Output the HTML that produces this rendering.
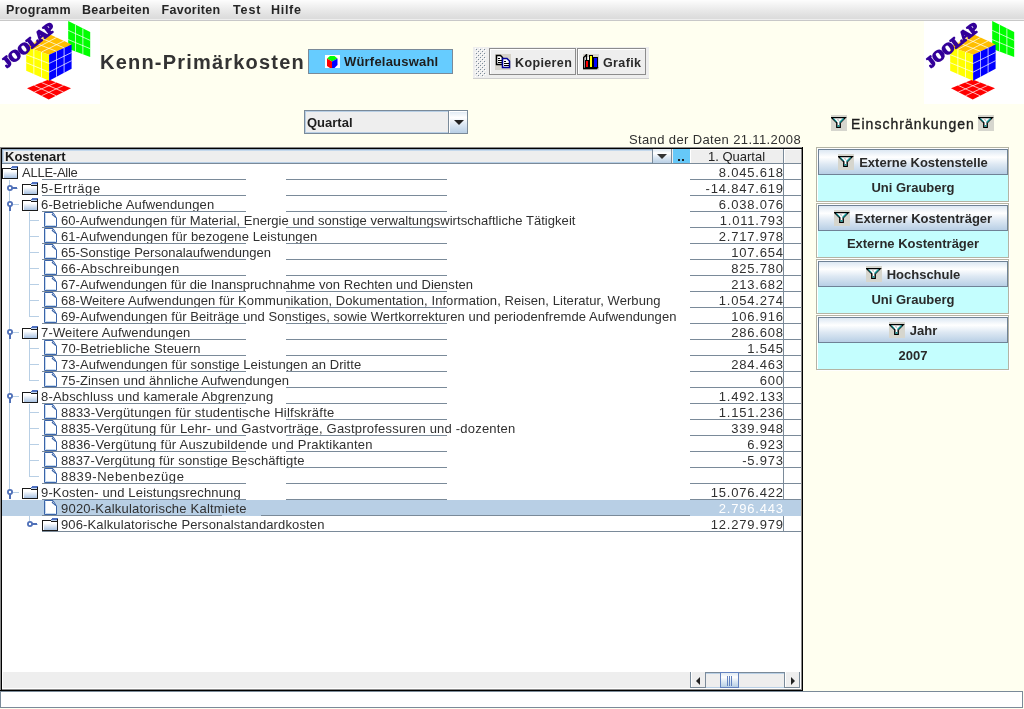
<!DOCTYPE html>
<html><head><meta charset="utf-8">
<style>
*{margin:0;padding:0;box-sizing:border-box}
html,body{width:1024px;height:709px;overflow:hidden;background:#fffff0;font-family:"Liberation Sans",sans-serif;color:#222}
.a{position:absolute}
#menu{left:0;top:0;width:1024px;height:21px;background:linear-gradient(#fdfdfd,#f5f5f5 20%,#e6e6e6 60%,#dcdcdc 90%);border-bottom:1px solid #c8c8c8;box-shadow:inset 0 -1px 0 #eeeeee}
#menu span{position:absolute;top:2px;margin-left:-1px;font-weight:bold;font-size:12.5px;color:#262626;line-height:16px}
.logo{top:21px;width:100px;height:83px;background:#fff}
.logo svg{position:absolute;left:0;top:-1px}
#title{left:100px;top:50px;font-size:20px;font-weight:bold;line-height:24px;color:#333;letter-spacing:1.2px;white-space:nowrap}
#wb{left:308px;top:49px;width:145px;height:25px;background:#66ccff;border:1px solid #7a8a99}
#wb span{position:absolute;left:35px;top:4px;font-weight:bold;font-size:13px;line-height:16px;color:#1e1e1e;letter-spacing:0.2px}
#tb{left:473px;top:47px;width:176px;height:32px;background:#eeeeee;border-bottom:1px solid #cfcfcf}
.btn{position:absolute;top:1px;height:27px;border:1px solid #8c8c8c;background:#eeeeee;box-shadow:inset 1px 1px 0 #fff}
.btn span{position:absolute;top:6px;font-weight:bold;font-size:12.5px;line-height:16px;color:#2a2a2a;letter-spacing:0.37px}
#combo{left:304px;top:110px;width:164px;height:24px;border:1px solid #7a8a99;background:#eeeeee}
#combo span{position:absolute;left:2px;top:4px;font-weight:bold;font-size:13px;line-height:16px;color:#1e1e1e}
#combo:before{content:"";position:absolute;left:0;top:0;width:142px;height:20px;border:1px solid #b8cfe5}
#combo i{position:absolute;left:143px;top:0;width:19px;height:22px;border-left:1px solid #7a8a99;background:linear-gradient(#dde8f3,#fff 30%,#dde8f3 60%,#b8cfe5);box-shadow:inset 1px 1px 0 #fff}
#combo i:after{content:"";position:absolute;left:5px;top:9px;border-left:5px solid transparent;border-right:5px solid transparent;border-top:5px solid #222}
#stand{left:600px;top:132px;width:201px;text-align:right;font-size:13px;line-height:16px;color:#303030;letter-spacing:0.37px;white-space:nowrap}
#table{left:0;top:147px;width:803px;height:544px;border:2px solid #000;background:#fff}
#hdr{position:absolute;left:0;top:0;width:799px;height:15px;background:#eeeeee;border-bottom:1px solid #7a8a99}
.row{position:absolute;left:0;width:799px;height:16px;font-size:13px;line-height:16px;white-space:nowrap;color:#303030}
.row .t{position:absolute;top:1px}
.row .n{position:absolute;right:18px;top:1px;text-align:right;letter-spacing:0.8px;margin-right:-0.8px}
.ln{position:absolute;height:1px;background:#7a8a99}
#filt{left:831px;top:115px}
.box{position:absolute;left:816px;width:193px;height:55px;border:1px solid #b4b4a4;background:#fff;box-shadow:1px 1px 0 #fff}
.box .bh{position:absolute;left:1px;top:1px;width:190px;height:26px;border:1px solid #6f8296;background:linear-gradient(#dde8f3,#fff 30%,#dde8f3 60%,#b8cfe5)}
.box .bv{position:absolute;left:1px;top:27px;width:190px;height:26px;background:#c4fefe}
.box .hc{position:absolute;left:0;top:4px;width:100%;height:16px;display:flex;justify-content:center;align-items:center;gap:5px}
.box .hc b{font-weight:bold;font-size:13px;line-height:16px;color:#2a2a2a;letter-spacing:0px;position:relative;top:1px}
.box .bv span{position:absolute;left:0;width:100%;text-align:center;font-weight:bold;font-size:13px;line-height:16px;color:#2a2a2a;letter-spacing:0px}
#status{left:0;top:691px;width:1023px;height:17px;border:1px solid #7a8a99;background:#fff}
</style></head><body style="will-change:transform">
<svg width="0" height="0" style="position:absolute"><defs>
<g id="funnel"><rect width="16" height="16" fill="#d6d6ce"/><path d="M0.7 2.6H14.2L9.2 7.8V12.4H5.8V7.8Z" fill="#fff" stroke="#000" stroke-width="1.4"/><path d="M2.3 3.4L5.6 6.8" stroke="#1a9a9a" stroke-width="1.1"/><path d="M12.6 3.4L8.6 7.6" stroke="#1a9a9a" stroke-width="1.5"/><rect x="6.5" y="10" width="2" height="1.8" fill="#1a9a9a"/><path d="M6.2 3.6L7.8 5.8" stroke="#c8c8c8" stroke-width="1.4"/></g>
</defs></svg>
<svg class="a" style="left:831px;top:115px" width="16" height="16"><use href="#funnel"/></svg><svg class="a" style="left:978px;top:115px" width="16" height="16"><use href="#funnel"/></svg>
<div id="menu" class="a">
<span style="left:7px;letter-spacing:0.3px">Programm</span><span style="left:83px;letter-spacing:0.33px">Bearbeiten</span><span style="left:162.5px;letter-spacing:0.3px">Favoriten</span><span style="left:234px;letter-spacing:0.9px">Test</span><span style="left:272px;letter-spacing:0.7px">Hilfe</span>
</div>
<div class="a logo" style="left:0"><!--LOGO--><svg width="100" height="83" viewBox="0 0 100 83"><path d="M68.2 1.1L90.2 12.1L90.2 37L68.2 28.8Z" fill="#00ff00"/><path d="M75.53 4.77L75.53 31.53" stroke="#fff" stroke-width="0.8" opacity="0.9"/><path d="M68.20 10.33L90.20 20.40" stroke="#fff" stroke-width="0.8" opacity="0.9"/><path d="M82.87 8.43L82.87 34.27" stroke="#fff" stroke-width="0.8" opacity="0.9"/><path d="M68.20 19.57L90.20 28.70" stroke="#fff" stroke-width="0.8" opacity="0.9"/><path d="M27 68.35L48.7 59.6L71 68.35L48.7 79.5Z" fill="#ff0000"/><path d="M34.23 65.43L56.13 75.78" stroke="#fff" stroke-width="0.8" opacity="0.9"/><path d="M34.23 72.07L56.13 62.52" stroke="#fff" stroke-width="0.8" opacity="0.9"/><path d="M41.47 62.52L63.57 72.07" stroke="#fff" stroke-width="0.8" opacity="0.9"/><path d="M41.47 75.78L63.57 65.43" stroke="#fff" stroke-width="0.8" opacity="0.9"/><path d="M26.2 26.7L49 14L71.6 24.4L49.1 34.8Z" fill="#ffbf00"/><path d="M33.80 22.47L56.60 31.33" stroke="#fff" stroke-width="0.8" opacity="0.9"/><path d="M33.83 29.40L56.53 17.47" stroke="#fff" stroke-width="0.8" opacity="0.9"/><path d="M41.40 18.23L64.10 27.87" stroke="#fff" stroke-width="0.8" opacity="0.9"/><path d="M41.47 32.10L64.07 20.93" stroke="#fff" stroke-width="0.8" opacity="0.9"/><path d="M26.2 26.7L49.1 34.8L49.1 60.8L26.2 50.7Z" fill="#ffff00"/><path d="M33.83 29.40L33.83 54.07" stroke="#fff" stroke-width="0.8" opacity="0.9"/><path d="M26.20 34.70L49.10 43.47" stroke="#fff" stroke-width="0.8" opacity="0.9"/><path d="M41.47 32.10L41.47 57.43" stroke="#fff" stroke-width="0.8" opacity="0.9"/><path d="M26.20 42.70L49.10 52.13" stroke="#fff" stroke-width="0.8" opacity="0.9"/><path d="M49.1 34.8L71.6 24.4L71.6 48.8L49.1 60.8Z" fill="#0000ff"/><path d="M56.60 31.33L56.60 56.80" stroke="#fff" stroke-width="0.8" opacity="0.9"/><path d="M49.10 43.47L71.60 32.53" stroke="#fff" stroke-width="0.8" opacity="0.9"/><path d="M64.10 27.87L64.10 52.80" stroke="#fff" stroke-width="0.8" opacity="0.9"/><path d="M49.10 52.13L71.60 40.67" stroke="#fff" stroke-width="0.8" opacity="0.9"/><text x="0" y="0" transform="translate(28.3 25) rotate(-38) scale(1.1 1.05)" text-anchor="middle" dominant-baseline="central" font-family="Liberation Serif" font-weight="bold" font-size="14" letter-spacing="0" fill="#330099" stroke="#330099" stroke-width="1.7" stroke-linejoin="round">JOOLAP</text></svg><!--/LOGO--></div>
<div class="a logo" style="left:924px"><!--LOGO--><svg width="100" height="83" viewBox="0 0 100 83"><path d="M68.2 1.1L90.2 12.1L90.2 37L68.2 28.8Z" fill="#00ff00"/><path d="M75.53 4.77L75.53 31.53" stroke="#fff" stroke-width="0.8" opacity="0.9"/><path d="M68.20 10.33L90.20 20.40" stroke="#fff" stroke-width="0.8" opacity="0.9"/><path d="M82.87 8.43L82.87 34.27" stroke="#fff" stroke-width="0.8" opacity="0.9"/><path d="M68.20 19.57L90.20 28.70" stroke="#fff" stroke-width="0.8" opacity="0.9"/><path d="M27 68.35L48.7 59.6L71 68.35L48.7 79.5Z" fill="#ff0000"/><path d="M34.23 65.43L56.13 75.78" stroke="#fff" stroke-width="0.8" opacity="0.9"/><path d="M34.23 72.07L56.13 62.52" stroke="#fff" stroke-width="0.8" opacity="0.9"/><path d="M41.47 62.52L63.57 72.07" stroke="#fff" stroke-width="0.8" opacity="0.9"/><path d="M41.47 75.78L63.57 65.43" stroke="#fff" stroke-width="0.8" opacity="0.9"/><path d="M26.2 26.7L49 14L71.6 24.4L49.1 34.8Z" fill="#ffbf00"/><path d="M33.80 22.47L56.60 31.33" stroke="#fff" stroke-width="0.8" opacity="0.9"/><path d="M33.83 29.40L56.53 17.47" stroke="#fff" stroke-width="0.8" opacity="0.9"/><path d="M41.40 18.23L64.10 27.87" stroke="#fff" stroke-width="0.8" opacity="0.9"/><path d="M41.47 32.10L64.07 20.93" stroke="#fff" stroke-width="0.8" opacity="0.9"/><path d="M26.2 26.7L49.1 34.8L49.1 60.8L26.2 50.7Z" fill="#ffff00"/><path d="M33.83 29.40L33.83 54.07" stroke="#fff" stroke-width="0.8" opacity="0.9"/><path d="M26.20 34.70L49.10 43.47" stroke="#fff" stroke-width="0.8" opacity="0.9"/><path d="M41.47 32.10L41.47 57.43" stroke="#fff" stroke-width="0.8" opacity="0.9"/><path d="M26.20 42.70L49.10 52.13" stroke="#fff" stroke-width="0.8" opacity="0.9"/><path d="M49.1 34.8L71.6 24.4L71.6 48.8L49.1 60.8Z" fill="#0000ff"/><path d="M56.60 31.33L56.60 56.80" stroke="#fff" stroke-width="0.8" opacity="0.9"/><path d="M49.10 43.47L71.60 32.53" stroke="#fff" stroke-width="0.8" opacity="0.9"/><path d="M64.10 27.87L64.10 52.80" stroke="#fff" stroke-width="0.8" opacity="0.9"/><path d="M49.10 52.13L71.60 40.67" stroke="#fff" stroke-width="0.8" opacity="0.9"/><text x="0" y="0" transform="translate(28.3 25) rotate(-38) scale(1.1 1.05)" text-anchor="middle" dominant-baseline="central" font-family="Liberation Serif" font-weight="bold" font-size="14" letter-spacing="0" fill="#330099" stroke="#330099" stroke-width="1.7" stroke-linejoin="round">JOOLAP</text></svg><!--/LOGO--></div>
<div id="title" class="a">Kenn-Primärkosten</div>
<div id="wb" class="a"><svg class="a" style="left:16px;top:5px" width="15" height="13"><rect width="15" height="13" fill="#fff"/><path d="M2 3.5L5 1H9.5L12.5 3.5L7 6.5Z" fill="#00ff00"/><path d="M2 3.5L7 6.5V13H5L2 11Z" fill="#ff0000"/><path d="M7 6.5L12.5 3.5V10L9.5 13H7Z" fill="#0000ff"/></svg><span>Würfelauswahl</span></div>
<div id="tb" class="a"><svg class="a" style="left:2px;top:1px" width="11" height="29"><defs><pattern id="gp" width="4" height="4" patternUnits="userSpaceOnUse"><rect x="1" y="1" width="1" height="1" fill="#7a8a99"/><rect x="3" y="3" width="1" height="1" fill="#7a8a99"/><rect x="2" y="2" width="1" height="1" fill="#fff"/><rect x="0" y="0" width="1" height="1" fill="#fff"/></pattern></defs><rect width="11" height="29" fill="url(#gp)"/></svg>
 <div class="btn" style="left:16px;width:87px"><svg class="a" style="left:5px;top:5px" width="16" height="16"><rect width="16" height="16" fill="#d6d3cb"/><path d="M1.5 1.5H5.5L7.5 3.5V10.5H1.5Z" fill="#fff" stroke="#000" stroke-width="1.5"/><rect x="3" y="4" width="2" height="1" fill="#000"/><rect x="3" y="6" width="4" height="1" fill="#000"/><rect x="3" y="8" width="4" height="1" fill="#000"/><path d="M7.5 4.5H12L14.5 7V13.5H7.5Z" fill="#fff" stroke="#000099" stroke-width="1.5"/><rect x="9" y="7" width="2" height="1" fill="#000"/><rect x="9" y="9" width="5" height="1" fill="#000"/><rect x="9" y="11" width="5" height="1" fill="#000"/></svg><span style="left:25px">Kopieren</span></div>
 <div class="btn" style="left:104px;width:69px"><svg class="a" style="left:5px;top:5px" width="16" height="16"><rect width="16" height="16" fill="#d6d3cb"/><path d="M1 3.5L3.5 1V14H14.5" fill="#fff" stroke="none"/><rect x="1" y="3" width="13" height="11" fill="#fff"/><path d="M0.7 15V3.5L3.5 0.7V6" fill="none" stroke="#000" stroke-width="1.4"/><path d="M0 14.5H13.5L15 13" fill="none" stroke="#000" stroke-width="1.4"/><rect x="2.5" y="6.5" width="3" height="7" fill="#ff0000" stroke="#000"/><rect x="6.5" y="1.5" width="3" height="12" fill="#ffff00" stroke="#000"/><rect x="10.5" y="3.5" width="4" height="10" fill="#0000ff" stroke="#000"/></svg><span style="left:25px">Grafik</span></div>
</div>
<div id="combo" class="a"><span>Quartal</span><i></i></div>
<div id="stand" class="a">Stand der Daten 21.11.2008</div>
<div id="table" class="a">
 <div id="hdr">
 <div class="a" style="left:0;top:0;width:650px;height:14px;border:1px solid #98aec6;border-bottom-color:#b8cfe5;border-right:none;background:#eeeeee;box-shadow:inset 1px 1px 0 #c4d8ec"></div>
 <div class="a" style="left:3px;top:0;font-weight:bold;font-size:13px;line-height:15px;color:#1a1a1a">Kostenart</div>
 <div class="a" style="left:650px;top:0;width:20px;height:14px;border-left:1px solid #7a8a99;border-right:1px solid #7a8a99;background:linear-gradient(#dde8f3,#fff 30%,#dde8f3 60%,#b8cfe5)"></div>
 <svg class="a" style="left:655px;top:5px" width="10" height="5"><path d="M0 0H10L5 5Z" fill="#333"/></svg>
 <div class="a" style="left:671px;top:0;width:17px;height:14px;background:#66c8f8"></div>
 <div class="a" style="left:676px;top:10px;width:2px;height:2px;background:#222"></div>
 <div class="a" style="left:680px;top:10px;width:2px;height:2px;background:#222"></div>
 <div class="a" style="left:688px;top:0;width:93px;height:14px;border-top:1px solid #fff;border-left:1px solid #fff;background:#eeeeee"></div>
 <div class="a" style="left:688px;top:0;width:93px;text-align:center;font-size:13px;line-height:15px;color:#222">1. Quartal</div>
 <div class="a" style="left:782px;top:0;width:17px;height:14px;border-top:1px solid #fff;border-left:1px solid #fff;background:#eeeeee"></div>
</div>
<!--ROWS--><div class="a" style="left:0;top:351px;width:799px;height:16px;background:#b8cfe5"></div><svg class="a" style="left:-2px;top:-149px" width="810" height="560"><defs><linearGradient id="fg" x1="0" y1="0" x2="0" y2="1"><stop offset="0" stop-color="#fff"/><stop offset="0.25" stop-color="#fff"/><stop offset="1" stop-color="#a9c2e2"/></linearGradient><g id="fold"><rect x="1" y="3" width="14" height="9" fill="url(#fg)"/><rect x="1" y="3" width="1" height="9" fill="#fff"/><rect x="0" y="2" width="1" height="11" fill="#1a1a1a"/><rect x="1" y="2" width="8" height="1" fill="#1a1a1a"/><rect x="10" y="0" width="6" height="1" fill="#4f70c0"/><rect x="9" y="1" width="7" height="1" fill="#4f70c0"/><rect x="9" y="2" width="6" height="1" fill="#c0d4ee"/><rect x="9" y="3" width="7" height="1" fill="#1a1a1a"/><rect x="15" y="1" width="1" height="12" fill="#1a1a1a"/><rect x="0" y="12" width="16" height="1" fill="#1a1a1a"/></g><g id="leaf"><path d="M0.5 0.5H9L12.5 6V14.5H0.5Z" fill="#fff" stroke="#3a64a8"/><path d="M1.5 1.5V13.5H11.5" fill="none" stroke="#c6daf0"/><path d="M9.2 1.2L8.3 2.6L10.2 4.2L11.8 5.6" fill="none" stroke="#3a64a8" stroke-width="1.1"/></g></defs><rect x="9" y="180" width="1" height="310" fill="#b8cfe5"/><rect x="29" y="212" width="1" height="105" fill="#b8cfe5"/><rect x="29" y="220" width="10" height="1" fill="#b8cfe5"/><rect x="29" y="236" width="10" height="1" fill="#b8cfe5"/><rect x="29" y="252" width="10" height="1" fill="#b8cfe5"/><rect x="29" y="268" width="10" height="1" fill="#b8cfe5"/><rect x="29" y="284" width="10" height="1" fill="#b8cfe5"/><rect x="29" y="300" width="10" height="1" fill="#b8cfe5"/><rect x="29" y="316" width="10" height="1" fill="#b8cfe5"/><rect x="29" y="340" width="1" height="41" fill="#b8cfe5"/><rect x="29" y="348" width="10" height="1" fill="#b8cfe5"/><rect x="29" y="364" width="10" height="1" fill="#b8cfe5"/><rect x="29" y="380" width="10" height="1" fill="#b8cfe5"/><rect x="29" y="404" width="1" height="73" fill="#b8cfe5"/><rect x="29" y="412" width="10" height="1" fill="#b8cfe5"/><rect x="29" y="428" width="10" height="1" fill="#b8cfe5"/><rect x="29" y="444" width="10" height="1" fill="#b8cfe5"/><rect x="29" y="460" width="10" height="1" fill="#b8cfe5"/><rect x="29" y="476" width="10" height="1" fill="#b8cfe5"/><rect x="29" y="516" width="1" height="6" fill="#b8cfe5"/><use href="#fold" x="2" y="166"/><rect x="12" y="187" width="5" height="2" fill="#4f70b8"/><rect x="17" y="188" width="1" height="1" fill="#b8cfe5"/><circle cx="10" cy="188" r="2.1" fill="#fff" stroke="#4f70b8" stroke-width="1.8"/><use href="#fold" x="22" y="182"/><rect x="9" y="206" width="2" height="5" fill="#4f70b8"/><rect x="13" y="204" width="6" height="1" fill="#b8cfe5"/><circle cx="10" cy="204" r="2.1" fill="#fff" stroke="#4f70b8" stroke-width="1.8"/><use href="#fold" x="22" y="198"/><use href="#leaf" x="44" y="212"/><use href="#leaf" x="44" y="228"/><use href="#leaf" x="44" y="244"/><use href="#leaf" x="44" y="260"/><use href="#leaf" x="44" y="276"/><use href="#leaf" x="44" y="292"/><use href="#leaf" x="44" y="308"/><rect x="9" y="334" width="2" height="5" fill="#4f70b8"/><rect x="13" y="332" width="6" height="1" fill="#b8cfe5"/><circle cx="10" cy="332" r="2.1" fill="#fff" stroke="#4f70b8" stroke-width="1.8"/><use href="#fold" x="22" y="326"/><use href="#leaf" x="44" y="340"/><use href="#leaf" x="44" y="356"/><use href="#leaf" x="44" y="372"/><rect x="9" y="398" width="2" height="5" fill="#4f70b8"/><rect x="13" y="396" width="6" height="1" fill="#b8cfe5"/><circle cx="10" cy="396" r="2.1" fill="#fff" stroke="#4f70b8" stroke-width="1.8"/><use href="#fold" x="22" y="390"/><use href="#leaf" x="44" y="404"/><use href="#leaf" x="44" y="420"/><use href="#leaf" x="44" y="436"/><use href="#leaf" x="44" y="452"/><use href="#leaf" x="44" y="468"/><rect x="9" y="494" width="2" height="5" fill="#4f70b8"/><rect x="13" y="492" width="6" height="1" fill="#b8cfe5"/><circle cx="10" cy="492" r="2.1" fill="#fff" stroke="#4f70b8" stroke-width="1.8"/><use href="#fold" x="22" y="486"/><use href="#leaf" x="44" y="500"/><rect x="32" y="523" width="5" height="2" fill="#4f70b8"/><rect x="37" y="524" width="1" height="1" fill="#b8cfe5"/><circle cx="30" cy="524" r="2.1" fill="#fff" stroke="#4f70b8" stroke-width="1.8"/><use href="#fold" x="42" y="518"/></svg><div class="row" style="top:15px"><span class="t" style="left:20px;letter-spacing:-0.25px">ALLE-Alle</span><span class="n">8.045.618</span></div><div class="row" style="top:31px"><span class="t" style="left:39px;letter-spacing:0.625px">5-Erträge</span><span class="n">-14.847.619</span></div><div class="row" style="top:47px"><span class="t" style="left:39px;letter-spacing:0.154px">6-Betriebliche Aufwendungen</span><span class="n">6.038.076</span></div><div class="row" style="top:63px"><span class="t" style="left:59px;letter-spacing:0.044px">60-Aufwendungen für Material, Energie und sonstige verwaltungswirtschaftliche Tätigkeit</span><span class="n">1.011.793</span></div><div class="row" style="top:79px"><span class="t" style="left:59px;letter-spacing:0.105px">61-Aufwendungen für bezogene Leistungen</span><span class="n">2.717.978</span></div><div class="row" style="top:95px"><span class="t" style="left:59px;letter-spacing:0.013px">65-Sonstige Personalaufwendungen</span><span class="n">107.654</span></div><div class="row" style="top:111px"><span class="t" style="left:59px;letter-spacing:0.338px">66-Abschreibungen</span><span class="n">825.780</span></div><div class="row" style="top:127px"><span class="t" style="left:59px;letter-spacing:0.036px">67-Aufwendungen für die Inanspruchnahme von Rechten und Diensten</span><span class="n">213.682</span></div><div class="row" style="top:143px"><span class="t" style="left:59px;letter-spacing:0.062px">68-Weitere Aufwendungen für Kommunikation, Dokumentation, Information, Reisen, Literatur, Werbung</span><span class="n">1.054.274</span></div><div class="row" style="top:159px"><span class="t" style="left:59px;letter-spacing:0.067px">69-Aufwendungen für Beiträge und Sonstiges, sowie Wertkorrekturen und periodenfremde Aufwendungen</span><span class="n">106.916</span></div><div class="row" style="top:175px"><span class="t" style="left:39px;letter-spacing:0.167px">7-Weitere Aufwendungen</span><span class="n">286.608</span></div><div class="row" style="top:191px"><span class="t" style="left:59px;letter-spacing:0.168px">70-Betriebliche Steuern</span><span class="n">1.545</span></div><div class="row" style="top:207px"><span class="t" style="left:59px;letter-spacing:0.081px">73-Aufwendungen für sonstige Leistungen an Dritte</span><span class="n">284.463</span></div><div class="row" style="top:223px"><span class="t" style="left:59px;letter-spacing:0.094px">75-Zinsen und ähnliche Aufwendungen</span><span class="n">600</span></div><div class="row" style="top:239px"><span class="t" style="left:39px;letter-spacing:0.176px">8-Abschluss und kamerale Abgrenzung</span><span class="n">1.492.133</span></div><div class="row" style="top:255px"><span class="t" style="left:59px;letter-spacing:0.214px">8833-Vergütungen für studentische Hilfskräfte</span><span class="n">1.151.236</span></div><div class="row" style="top:271px"><span class="t" style="left:59px;letter-spacing:0.21px">8835-Vergütung für Lehr- und Gastvorträge, Gastprofessuren und -dozenten</span><span class="n">339.948</span></div><div class="row" style="top:287px"><span class="t" style="left:59px;letter-spacing:0.227px">8836-Vergütung für Auszubildende und Praktikanten</span><span class="n">6.923</span></div><div class="row" style="top:303px"><span class="t" style="left:59px;letter-spacing:0.126px">8837-Vergütung für sonstige Beschäftigte</span><span class="n">-5.973</span></div><div class="row" style="top:319px"><span class="t" style="left:59px;letter-spacing:0.58px">8839-Nebenbezüge</span><span class="n"></span></div><div class="row" style="top:335px"><span class="t" style="left:39px;letter-spacing:0.15px">9-Kosten- und Leistungsrechnung</span><span class="n">15.076.422</span></div><div class="row" style="top:351px"><span class="t" style="left:59px;letter-spacing:0.217px">9020-Kalkulatorische Kaltmiete</span><span class="n" style=color:#fff>2.796.443</span></div><div class="row" style="top:367px"><span class="t" style="left:59px;letter-spacing:0.132px">906-Kalkulatorische Personalstandardkosten</span><span class="n">12.279.979</span></div><div class="ln" style="left:40px;top:30px;width:204px"></div><div class="ln" style="left:284px;top:30px;width:161px"></div><div class="ln" style="left:688px;top:30px;width:111px"></div><div class="ln" style="left:40px;top:46px;width:204px"></div><div class="ln" style="left:284px;top:46px;width:161px"></div><div class="ln" style="left:688px;top:46px;width:111px"></div><div class="ln" style="left:40px;top:62px;width:204px"></div><div class="ln" style="left:284px;top:62px;width:161px"></div><div class="ln" style="left:688px;top:62px;width:111px"></div><div class="ln" style="left:40px;top:78px;width:204px"></div><div class="ln" style="left:284px;top:78px;width:161px"></div><div class="ln" style="left:688px;top:78px;width:111px"></div><div class="ln" style="left:40px;top:94px;width:204px"></div><div class="ln" style="left:284px;top:94px;width:161px"></div><div class="ln" style="left:688px;top:94px;width:111px"></div><div class="ln" style="left:40px;top:110px;width:204px"></div><div class="ln" style="left:284px;top:110px;width:161px"></div><div class="ln" style="left:688px;top:110px;width:111px"></div><div class="ln" style="left:40px;top:126px;width:204px"></div><div class="ln" style="left:284px;top:126px;width:161px"></div><div class="ln" style="left:688px;top:126px;width:111px"></div><div class="ln" style="left:40px;top:142px;width:204px"></div><div class="ln" style="left:284px;top:142px;width:161px"></div><div class="ln" style="left:688px;top:142px;width:111px"></div><div class="ln" style="left:40px;top:158px;width:204px"></div><div class="ln" style="left:284px;top:158px;width:161px"></div><div class="ln" style="left:688px;top:158px;width:111px"></div><div class="ln" style="left:40px;top:174px;width:204px"></div><div class="ln" style="left:284px;top:174px;width:161px"></div><div class="ln" style="left:688px;top:174px;width:111px"></div><div class="ln" style="left:40px;top:190px;width:204px"></div><div class="ln" style="left:284px;top:190px;width:161px"></div><div class="ln" style="left:688px;top:190px;width:111px"></div><div class="ln" style="left:40px;top:206px;width:204px"></div><div class="ln" style="left:284px;top:206px;width:161px"></div><div class="ln" style="left:688px;top:206px;width:111px"></div><div class="ln" style="left:40px;top:222px;width:204px"></div><div class="ln" style="left:284px;top:222px;width:161px"></div><div class="ln" style="left:688px;top:222px;width:111px"></div><div class="ln" style="left:40px;top:238px;width:204px"></div><div class="ln" style="left:284px;top:238px;width:161px"></div><div class="ln" style="left:688px;top:238px;width:111px"></div><div class="ln" style="left:40px;top:254px;width:204px"></div><div class="ln" style="left:284px;top:254px;width:161px"></div><div class="ln" style="left:688px;top:254px;width:111px"></div><div class="ln" style="left:40px;top:270px;width:204px"></div><div class="ln" style="left:284px;top:270px;width:161px"></div><div class="ln" style="left:688px;top:270px;width:111px"></div><div class="ln" style="left:40px;top:286px;width:204px"></div><div class="ln" style="left:284px;top:286px;width:161px"></div><div class="ln" style="left:688px;top:286px;width:111px"></div><div class="ln" style="left:40px;top:302px;width:204px"></div><div class="ln" style="left:284px;top:302px;width:161px"></div><div class="ln" style="left:688px;top:302px;width:111px"></div><div class="ln" style="left:40px;top:318px;width:204px"></div><div class="ln" style="left:284px;top:318px;width:161px"></div><div class="ln" style="left:688px;top:318px;width:111px"></div><div class="ln" style="left:40px;top:334px;width:204px"></div><div class="ln" style="left:284px;top:334px;width:161px"></div><div class="ln" style="left:688px;top:334px;width:111px"></div><div class="ln" style="left:40px;top:350px;width:204px"></div><div class="ln" style="left:284px;top:350px;width:161px"></div><div class="ln" style="left:688px;top:350px;width:111px"></div><div class="ln" style="left:40px;top:366px;width:180px"></div><div class="ln" style="left:259px;top:366px;width:429px"></div><div class="ln" style="left:40px;top:382px;width:759px"></div><div class="a" style="left:781px;top:0;width:1px;height:351px;background:#7a8a99"></div><div class="a" style="left:781px;top:367px;width:1px;height:16px;background:#7a8a99"></div><!--/ROWS-->
<div class="a" style="left:1px;top:523px;width:687px;height:16px;background:#eeeeee"></div>
<div class="a" style="left:688px;top:523px;width:110px;height:1px;background:#7a8a99"></div>
<div class="a" style="left:688px;top:523px;width:16px;height:16px;border:1px solid #7a8a99;border-top:none;background:#eeeeee;box-shadow:inset 1px 0 0 #fff"></div>
<svg class="a" style="left:694px;top:528px" width="4" height="8"><path d="M4 0V8L0 4Z" fill="#222"/></svg>
<div class="a" style="left:704px;top:524px;width:78px;height:15px;background:#eeeeee;border-top:1px solid #b8cfe5;border-bottom:1px solid #b8cfe5"></div>
<div class="a" style="left:718px;top:523px;width:19px;height:16px;border:1px solid #6382bf;background:linear-gradient(#dde8f3,#fff 30%,#dde8f3 60%,#b8cfe5)"></div>
<div class="a" style="left:725px;top:527px;width:1px;height:10px;background:#6382bf"></div>
<div class="a" style="left:727px;top:527px;width:1px;height:10px;background:#6382bf"></div>
<div class="a" style="left:729px;top:527px;width:1px;height:10px;background:#6382bf"></div>
<div class="a" style="left:782px;top:523px;width:16px;height:16px;border:1px solid #7a8a99;border-top:none;background:#eeeeee;box-shadow:inset 1px 0 0 #fff"></div>
<svg class="a" style="left:789px;top:528px" width="4" height="8"><path d="M0 0V8L4 4Z" fill="#222"/></svg>

</div>
<div class="a" style="left:851px;top:116px;font-size:14px;line-height:16px;letter-spacing:1.05px;color:#1e1e1e;-webkit-text-stroke:0.35px #1e1e1e">Einschränkungen</div>
<div class="box" style="top:147px"><div class="bh"><div class="hc"><svg width="16" height="16"><use href="#funnel"/></svg><b>Externe Kostenstelle</b></div></div><div class="bv"><span style="top:5px">Uni Grauberg</span></div></div>
<div class="box" style="top:203px"><div class="bh"><div class="hc"><svg width="16" height="16"><use href="#funnel"/></svg><b>Externer Kostenträger</b></div></div><div class="bv"><span style="top:5px">Externe Kostenträger</span></div></div>
<div class="box" style="top:259px"><div class="bh"><div class="hc"><svg width="16" height="16"><use href="#funnel"/></svg><b>Hochschule</b></div></div><div class="bv"><span style="top:5px">Uni Grauberg</span></div></div>
<div class="box" style="top:315px"><div class="bh"><div class="hc"><svg width="16" height="16"><use href="#funnel"/></svg><b>Jahr</b></div></div><div class="bv"><span style="top:5px">2007</span></div></div>
<div class="a" style="left:0;top:147px;width:802px;height:1px;background:#8a8a8a"></div><div class="a" style="left:0;top:147px;width:1px;height:543px;background:#8a8a8a"></div><div class="a" style="left:801px;top:149px;width:1px;height:541px;background:#8a8a8a"></div><div class="a" style="left:2px;top:689px;width:800px;height:1px;background:#8a8a8a"></div>
<div id="status" class="a"></div>
</body></html>
